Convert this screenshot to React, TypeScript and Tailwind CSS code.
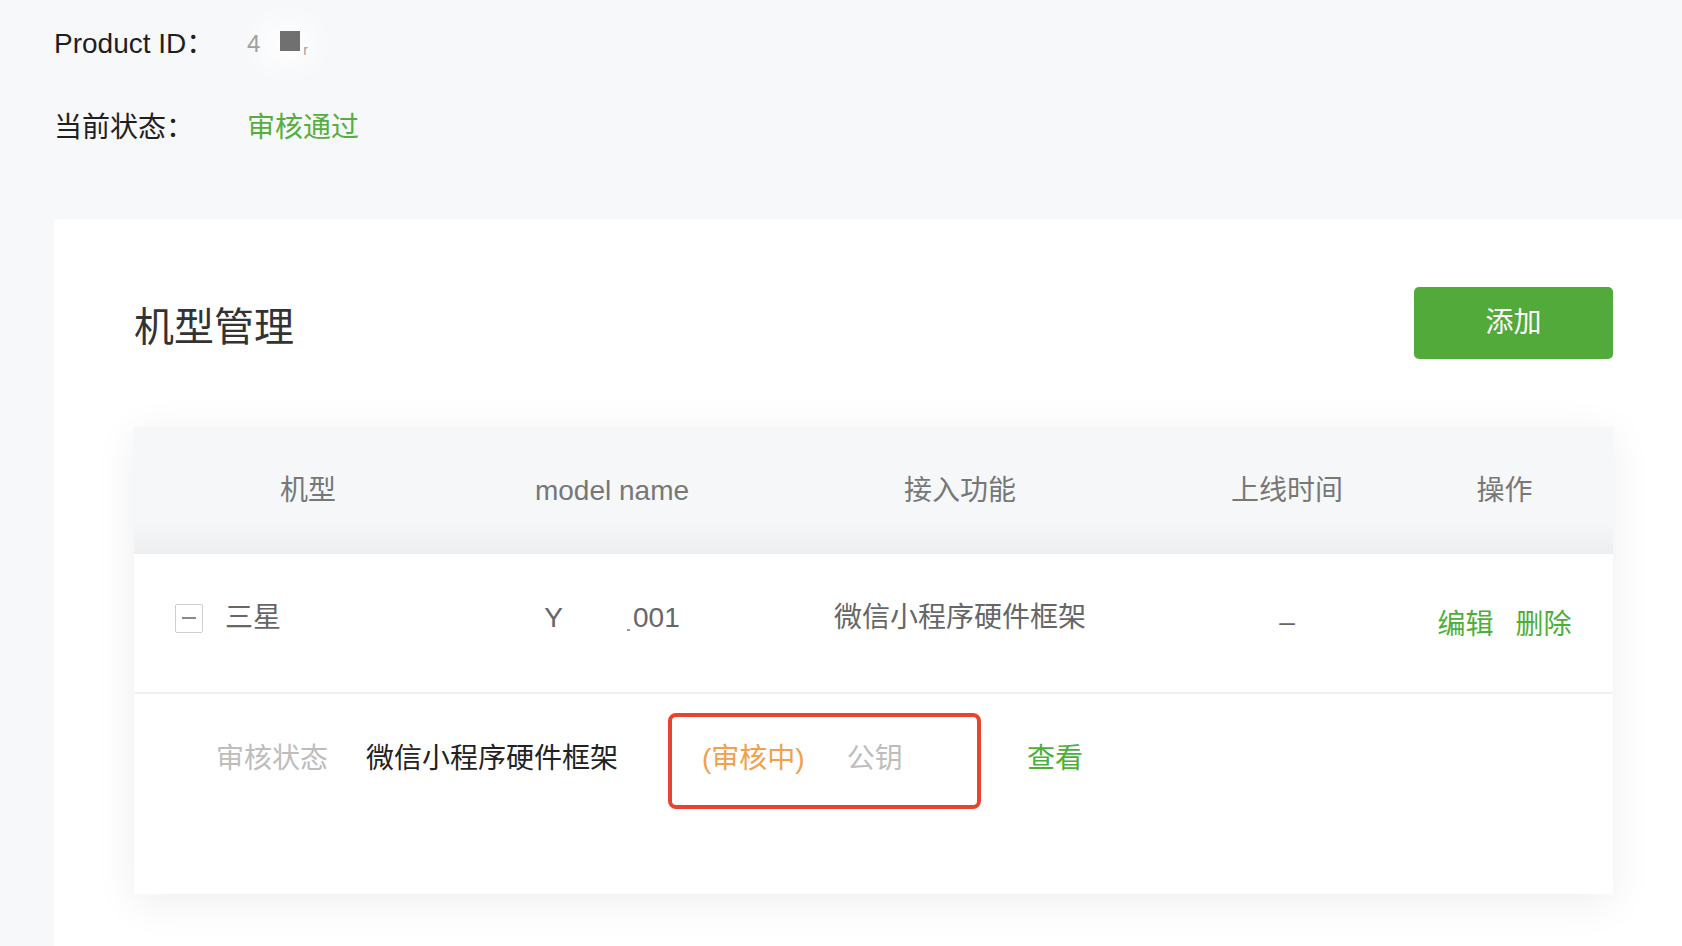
export default function App() {
  return (
    <div className="h-[946px] overflow-hidden bg-[#f7f8fa] flex flex-col font-['Liberation_Sans','Noto_Sans_CJK_SC',sans-serif]">
      {/* product info */}
      <div className="pl-[54px] pt-[24px] text-[28px] leading-[40px] text-[#1f1f1f]">
        <div className="flex items-center">
          <span className="w-[193px]">Product ID：</span>
          <span className="relative flex items-center h-[40px]">
            <span className="absolute left-[8px] top-[-6px] w-[64px] h-[52px] rounded-full bg-white/70 blur-md" />
            <span className="relative text-[24px] text-[#a0a0a0]">4</span>
            <span className="relative ml-[20px] w-[20px] h-[20px] bg-[#707070] -translate-y-[3px]" />
            <span className="relative ml-[3px] text-[14px] text-[#a0a0a0] translate-y-[6px]">r</span>
          </span>
        </div>
        <div className="flex items-center mt-[44px]">
          <span className="w-[193px]">当前状态：</span>
          <span className="text-[#55ae3e]">审核通过</span>
        </div>
      </div>

      {/* card */}
      <div className="ml-[54px] mt-[71px] flex-1 bg-white rounded-tl-[4px] pt-[68px] pl-[80px] pr-[69px]">
        <div className="flex items-center justify-between">
          <h1 className="text-[40px] leading-[48px] text-[#333] pt-[8px]">机型管理</h1>
          <button className="w-[199px] h-[72px] rounded-[5px] bg-[#52aa3a] text-white text-[28px]">
            添加
          </button>
        </div>

        <div className="mt-[68px] shadow-[0_8px_40px_rgba(0,0,0,0.07)]">
          <div className="grid grid-cols-[348px_260px_436px_218px_1fr] h-[127px] items-center text-center text-[28px] text-[#777] bg-linear-to-b from-[#f6f7f9] from-75% to-[#eceef0]">
            <span>机型</span>
            <span>model name</span>
            <span>接入功能</span>
            <span>上线时间</span>
            <span>操作</span>
          </div>

          <div className="grid grid-cols-[348px_260px_436px_218px_1fr] h-[140px] pb-[10px] items-center text-[28px] text-[#666] bg-white border-b-2 border-[#f0f0f0]">
            <div className="flex items-center pl-[41px] gap-[22px]">
              <span className="w-[28px] h-[29px] border-[1.5px] border-[#cfcfcf] rounded-[2px] flex items-center justify-center">
                <span className="w-[14px] h-[2px] bg-[#8a8a8a]" />
              </span>
              <span>三星</span>
            </div>
            <div className="flex items-center justify-center">
              <span>Y</span>
              <span className="w-[64px]" />
              <span className="w-[3px] h-[2px] bg-[#999] self-end mb-[8px] mr-[3px]" />
              <span>001</span>
            </div>
            <span className="text-center">微信小程序硬件框架</span>
            <span className="text-center translate-y-[4px]">–</span>
            <div className="flex justify-center gap-[22px] text-[#4caf3a] mt-[14px]">
              <span>编辑</span>
              <span>删除</span>
            </div>
          </div>

          <div className="h-[200px] bg-white flex items-start pt-[19px] pl-[82px] text-[28px] leading-[40px]">
            <span className="mt-[26px] text-[#bdbdbd]">审核状态</span>
            <span className="mt-[26px] ml-[38px] text-[#222]">微信小程序硬件框架</span>
            <div className="ml-[50px] w-[313px] h-[96px] border-4 border-[#e9432b] rounded-[8px] pl-[30px] pt-[22px] flex">
              <span className="text-[#f2a04a]">(审核中)</span>
              <span className="ml-[42px] text-[#bdbdbd]">公钥</span>
            </div>
            <span className="mt-[26px] ml-[46px] text-[#4caf3a]">查看</span>
          </div>
        </div>
      </div>
    </div>
  );
}
